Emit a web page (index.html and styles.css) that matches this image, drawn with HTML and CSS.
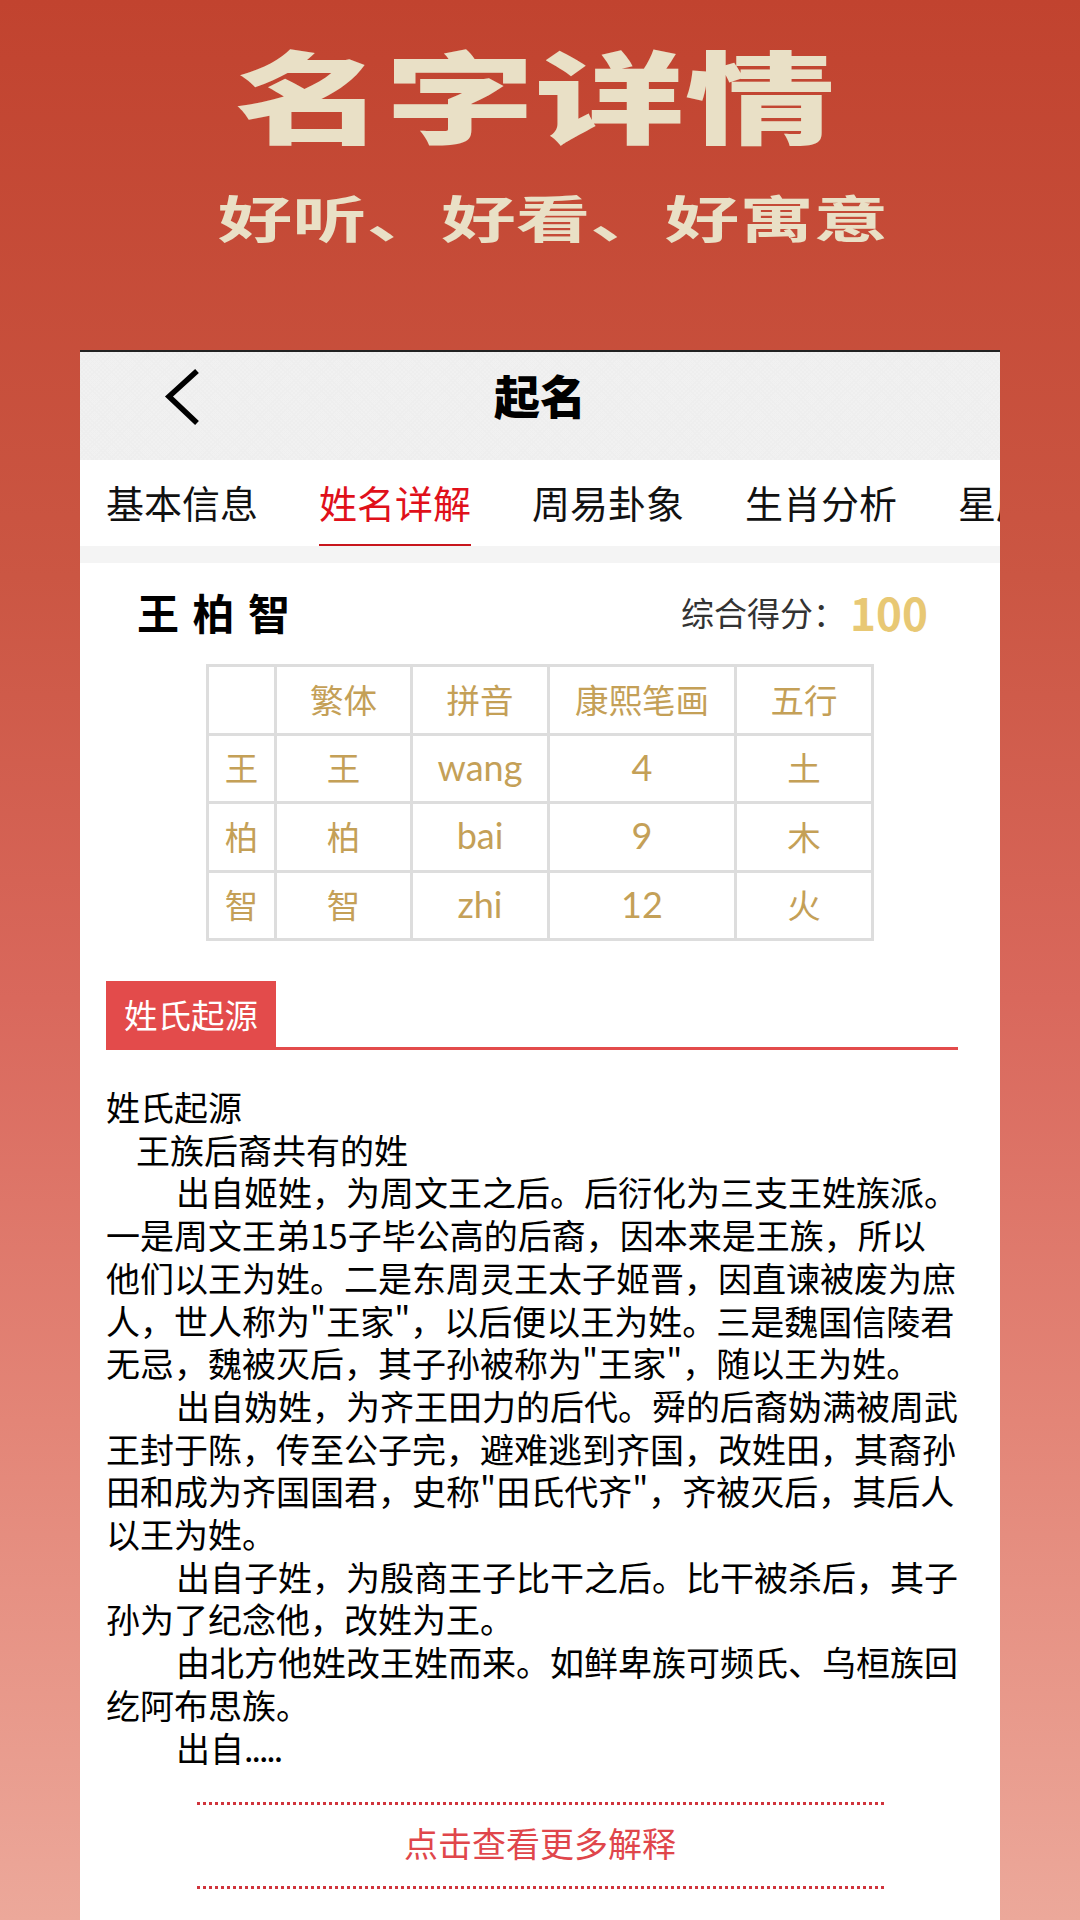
FILE: index.html
```html
<!DOCTYPE html>
<html lang="zh-CN">
<head>
    <meta charset="UTF-8">
    <meta name="viewport" content="width=device-width, initial-scale=1.0">
    <title>名字详情</title>
    <link rel="stylesheet" href="styles.css">
</head>
<body>
    <div class="hero">
        <h1 class="hero-title">名字详情</h1>
        <p class="hero-sub">好听、好看、好寓意</p>
    </div>

    <div class="card">
        <div class="topbar">
            <svg class="back" width="36" height="58" viewBox="0 0 36 58">
                <path d="M33 3 L5 28.5 L33 55" fill="none" stroke="#000" stroke-width="5.5"/>
            </svg>
            <div class="topbar-title">起名</div>
        </div>

        <div class="tabs">
            <div class="tab">基本信息</div>
            <div class="tab active">姓名详解</div>
            <div class="tab">周易卦象</div>
            <div class="tab">生肖分析</div>
            <div class="tab">星座分析</div>
        </div>

        <div class="name-row">
            <div class="name">王 柏 智</div>
            <div class="score">综合得分：<span class="score-num">100</span></div>
        </div>

        <table class="info">
            <tr><td></td><td>繁体</td><td>拼音</td><td>康熙笔画</td><td>五行</td></tr>
            <tr><td>王</td><td>王</td><td class="latin">wang</td><td class="latin">4</td><td>土</td></tr>
            <tr><td>柏</td><td>柏</td><td class="latin">bai</td><td class="latin">9</td><td>木</td></tr>
            <tr><td>智</td><td>智</td><td class="latin">zhi</td><td class="latin">12</td><td>火</td></tr>
        </table>

        <div class="section-head"><span class="section-label">姓氏起源</span></div>

        <div class="content">
            <p>姓氏起源</p>
            <p class="indent-sm">王族后裔共有的姓</p>
            <p class="indent">出自姬姓，为周文王之后。后衍化为三支王姓族派。一是周文王弟15子毕公高的后裔，因本来是王族，所以他们以王为姓。二是东周灵王太子姬晋，因直谏被废为庶人，世人称为"王家"，以后便以王为姓。三是魏国信陵君无忌，魏被灭后，其子孙被称为"王家"，随以王为姓。</p>
            <p class="indent">出自妫姓，为齐王田力的后代。舜的后裔妫满被周武王封于陈，传至公子完，避难逃到齐国，改姓田，其裔孙田和成为齐国国君，史称"田氏代齐"，齐被灭后，其后人以王为姓。</p>
            <p class="indent">出自子姓，为殷商王子比干之后。比干被杀后，其子孙为了纪念他，改姓为王。</p>
            <p class="indent">由北方他姓改王姓而来。如鲜卑族可频氏、乌桓族回纥阿布思族。</p>
            <p class="indent">出自<span class="dots">.....</span></p>
        </div>

        <div class="more">点击查看更多解释</div>
    </div>
</body>
</html>
```

FILE: styles.css
```css
* {
    box-sizing: border-box;
}

html, body {
    height: 100%;
}

body {
    margin: 0;
    height: 1920px;
    overflow: hidden;
    display: flex;
    flex-direction: column;
    font-family: "Noto Sans CJK SC", "Noto Sans", sans-serif;
    background: linear-gradient(to bottom, #c1432f 0%, #cb5643 30%, #d9685c 52%, #e38577 74%, #eca89a 100%);
}

.hero {
    height: 350px;
    overflow: hidden;
    color: #e9e0c6;
}

.hero-title {
    width: 400px;
    margin: 43px auto 0;
    font-size: 100px;
    line-height: 100px;
    font-weight: 900;
    transform: translateX(-5px) scaleX(1.5);
}

.hero-sub {
    width: 450px;
    margin: 48px auto 0;
    font-size: 50px;
    line-height: 50px;
    font-weight: 700;
    white-space: nowrap;
    transform: translateX(13px) scaleX(1.49);
}

.card {
    flex: 1;
    margin: 0 80px;
    background-color: #fff;
    border-top: 2px solid #222;
    overflow: hidden;
}

.topbar {
    height: 108px;
    display: grid;
    grid-template-columns: 1fr auto 1fr;
    align-items: center;
    padding: 0 0 18px 84px;
    background-color: #f1f1f1;
    background-image:
        repeating-linear-gradient(45deg, #eeeeee 0 1px, transparent 1px 3px),
        repeating-linear-gradient(-45deg, #eeeeee 0 1px, transparent 1px 3px);
}

.back {
    display: block;
}

.topbar-title {
    margin: 0 0 6px -84px;
    font-size: 46px;
    line-height: 60px;
    font-weight: 900;
    color: #000;
}

.tabs {
    display: flex;
    gap: 61px;
    height: 103px;
    padding-left: 26px;
    border-bottom: 17px solid #f4f4f4;
    background-color: #fff;
}

.tab {
    flex: none;
    width: 152px;
    font-size: 38px;
    line-height: 83px;
    color: #111;
    white-space: nowrap;
}

.tab.active {
    height: 86px;
    color: #e0101a;
    border-bottom: 2px solid #c8161d;
}

.name-row {
    height: 101px;
    display: flex;
    justify-content: space-between;
    align-items: center;
    padding: 0 72px 4px 57px;
}

.name {
    font-size: 42px;
    font-weight: 700;
    letter-spacing: 2px;
    color: #000;
}

.score {
    display: flex;
    align-items: center;
    font-size: 33px;
    margin-left: -4px;
    color: #333;
}

.score-num {
    margin-left: 4px;
    font-size: 44px;
    font-weight: 700;
    color: #e8c874;
}

.info {
    width: 665px;
    margin-left: 126px;
    table-layout: fixed;
    border-collapse: collapse;
    border: 3px solid #ddd;
}

.info td {
    height: 68.5px;
    padding: 0 0 3px;
    border: 3px solid #ddd;
    text-align: center;
    font-family: "Noto Sans CJK SC", sans-serif;
    font-size: 33.5px;
    color: #c4a057;
}

.info td.latin {
    font-family: "Lato", sans-serif;
    font-size: 36px;
}

.info td:nth-child(1) { width: 68px; }
.info td:nth-child(2) { width: 136px; }
.info td:nth-child(3) { width: 137px; }
.info td:nth-child(4) { width: 187px; }
.info td:nth-child(5) { width: 137px; }

.section-head {
    margin: 40px 42px 0 26px;
    height: 69px;
    border-bottom: 3px solid #e34b4b;
}

.section-label {
    display: inline-block;
    width: 170px;
    height: 69px;
    background-color: #e34b4b;
    color: #fff;
    font-size: 33.5px;
    line-height: 65px;
    text-align: center;
}

.content {
    margin: 36px 42px 0 26px;
    font-size: 34px;
    line-height: 42.7px;
    color: #000;
}

.content p {
    margin: 0;
}

.indent-sm {
    text-indent: 30px;
}

.indent {
    text-indent: 70px;
}

.dots {
    letter-spacing: -2px;
}

.more {
    width: 687px;
    height: 87px;
    margin: 33px auto 0;
    border-top: 3px dotted #d0343c;
    border-bottom: 3px dotted #d0343c;
    text-align: center;
    font-size: 34px;
    line-height: 76px;
    color: #e0464b;
}
```
